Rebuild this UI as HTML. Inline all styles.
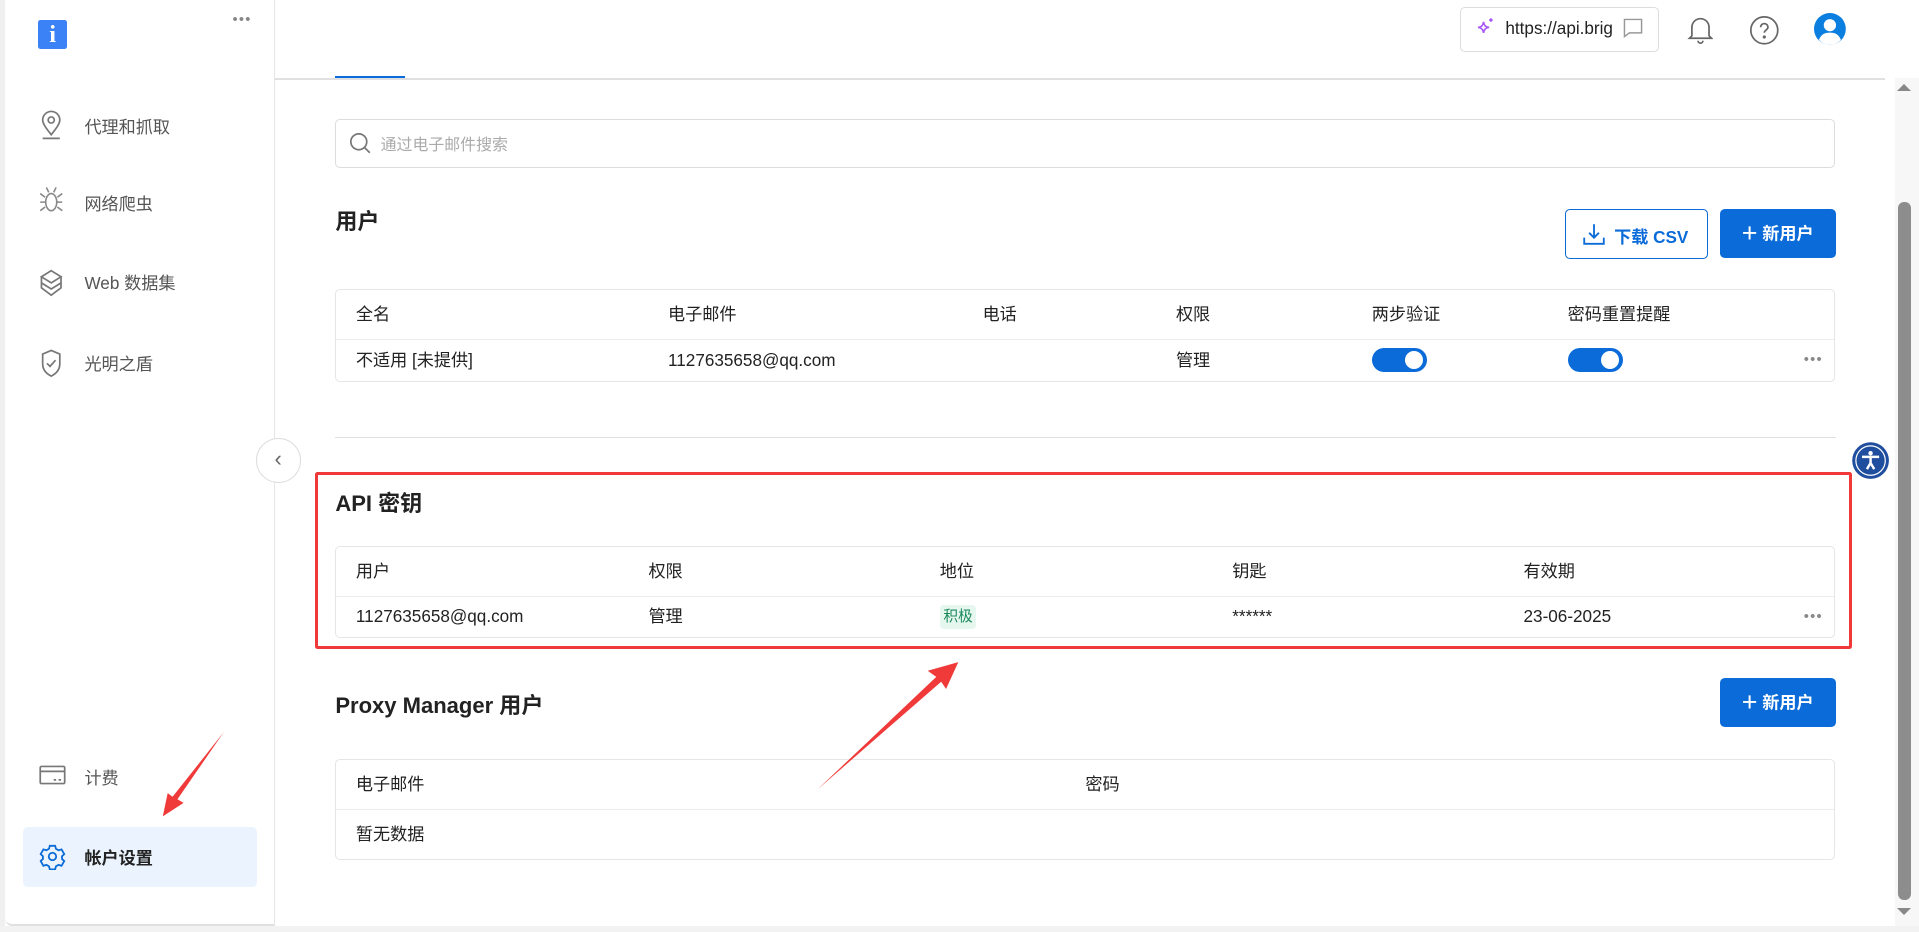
<!DOCTYPE html>
<html><head><meta charset="utf-8"><style>
html,body{margin:0;padding:0;width:1919px;height:932px;overflow:hidden;background:#fff;}
#z{zoom:1.2239;width:1568px;height:762px;position:relative;font-family:"Liberation Sans","Noto Sans CJK SC",sans-serif;color:#222;font-size:14px;}
.a{position:absolute;}
.nav{position:absolute;left:32px;font-size:14px;color:#555;}
.nav span{position:absolute;left:37px;top:0;white-space:nowrap;}
.tbl{position:absolute;left:274px;width:1224px;border:1px solid #e6e6e6;border-radius:4px;}
.row{position:relative;border-bottom:1px solid #ececec;}
.row:last-child{border-bottom:none}
.row span{position:absolute;top:0;bottom:0;display:flex;align-items:center;white-space:nowrap;line-height:1;}
.btnb{position:absolute;background:#0b6bd8;color:#fff;border-radius:4px;font-weight:bold;font-size:14px;text-align:center;}
.tog{position:absolute;width:45px;height:19px;border-radius:10px;background:#0b6bd8;}
.tog:after{content:"";position:absolute;right:3px;top:2px;width:15px;height:15px;border-radius:50%;background:#fff;}
.dots{color:#888;font-size:12px;letter-spacing:1px}
</style></head><body><div id="z">
<div class="a" style="left:0;top:0;width:4px;height:757px;background:#f0f0f0"></div>
<div class="a" style="left:4px;top:0;width:220px;height:755px;border-right:1px solid #e5e5e5;border-bottom:2px solid #e0e0e0;border-radius:0 0 0 6px"></div>
<div class="a" style="left:0;top:757px;width:1568px;height:5px;background:#f2f2f2"></div>
<div class="a" style="left:31px;top:16px;width:24px;height:24px;background:#3b82f6;border-radius:2px;color:#fff;font-weight:bold;font-family:'Liberation Serif',serif;font-size:20px;text-align:center;line-height:24px">i</div>
<div class="a dots" style="left:190px;top:10px">•••</div>
<div class="nav" style="top:89px"><svg width="20" height="26" viewBox="0 0 20 26" fill="none" stroke="#777" stroke-width="1.4"><path d="M10 21C6 16 3 12 3 9a7 7 0 0114 0c0 3-3 7-7 12z"/><circle cx="10" cy="9" r="2.5"/><path d="M3 24h14"/></svg><span style="top:3px">代理和抓取</span></div>
<div class="nav" style="top:151px"><svg width="20" height="28" viewBox="0 0 20 28" fill="none" stroke="#888" stroke-width="1.3"><ellipse cx="10" cy="14" rx="4.5" ry="7"/><path d="M5 10L1 7M5 14H1M5 18l-4 3M15 10l4-3M15 14h4M15 18l4 3M8 6L6 2M12 6l2-4"/></svg><span style="top:4px">网络爬虫</span></div>
<div class="nav" style="top:218px"><svg width="20" height="26" viewBox="0 0 20 26" fill="none" stroke="#777" stroke-width="1.4"><path d="M10 3l8 5-8 5-8-5z"/><path d="M2 8v9l8 6 8-6V8"/><path d="M2 13l8 5 8-5"/></svg><span style="top:2px">Web 数据集</span></div>
<div class="nav" style="top:284px"><svg width="20" height="26" viewBox="0 0 20 26" fill="none" stroke="#777" stroke-width="1.4"><path d="M10 2l7 3v8c0 5-3 8-7 10-4-2-7-5-7-10V5z"/><path d="M6.5 12.5l2.5 2.5 4.5-5"/></svg><span style="top:2px">光明之盾</span></div>
<div class="nav" style="top:624px"><svg width="22" height="18" viewBox="0 0 22 18" fill="none" stroke="#777" stroke-width="1.4"><rect x="1" y="2" width="20" height="14" rx="1"/><path d="M1 6h20M12 13h2M16 13h2"/></svg><span style="top:0px">计费</span></div>
<div class="a" style="left:19px;top:676px;width:191px;height:49px;background:#ebf4fe;border-radius:4px"></div>
<div class="nav" style="top:689px"><svg width="22" height="22" viewBox="0 0 24 24" fill="none" stroke="#0b6bd8" stroke-width="1.6"><path d="M9.6 2.5h4.8l.7 2.7 2.3 1.3 2.7-.8 2.4 4.2-2 1.9v2.4l2 1.9-2.4 4.2-2.7-.8-2.3 1.3-.7 2.7H9.6l-.7-2.7-2.3-1.3-2.7.8-2.4-4.2 2-1.9v-2.4l-2-1.9 2.4-4.2 2.7.8 2.3-1.3z"/><circle cx="12" cy="12" r="3.3"/></svg><span style="top:1px;color:#222;font-weight:bold">帐户设置</span></div>
<div class="a" style="left:209px;top:358px;width:35px;height:35px;border:1px solid #ddd;border-radius:50%;background:#fff;text-align:center;line-height:33px;color:#666;font-size:18px">‹</div>
<div class="a" style="left:225px;top:64px;width:1315px;height:1px;background:#e0e0e0"></div>
<div class="a" style="left:274px;top:62px;width:57px;height:2px;background:#0b6bd8"></div>
<div class="a" style="left:1193px;top:6px;width:161px;height:35px;border:1px solid #ddd;border-radius:4px"></div>
<svg class="a" style="left:1205px;top:14px" width="18" height="18" viewBox="0 0 18 18" fill="none" stroke="#a855f7" stroke-width="1.3"><path d="M7 4c.5 3 1.5 4 4.5 4.5C8.5 9 7.5 10 7 13c-.5-3-1.5-4-4.5-4.5C5.5 8 6.5 7 7 4z"/><path d="M13 1v3M11.5 2.5h3"/></svg>
<div class="a" style="left:1230px;top:15px;width:88px;overflow:hidden;white-space:nowrap;font-size:14px">https://api.brightdata</div>
<svg class="a" style="left:1325px;top:14px" width="18" height="18" viewBox="0 0 18 18" fill="none" stroke="#999" stroke-width="1.2"><path d="M2 2h14v11H6l-4 3z"/></svg>
<svg class="a" style="left:1378px;top:12px" width="22" height="24" viewBox="0 0 22 24" fill="none" stroke="#666" stroke-width="1.4"><path d="M4 17V10a7 7 0 0114 0v7l2 2H2z"/><path d="M9 21a2 2 0 004 0"/></svg>
<svg class="a" style="left:1429px;top:12px" width="25" height="25" viewBox="0 0 25 25" fill="none" stroke="#666" stroke-width="1.4"><circle cx="12.5" cy="12.5" r="11"/><path d="M9.5 10a3 3 0 116 0c0 2-3 2.5-3 4.5"/><circle cx="12.5" cy="18" r=".6" fill="#666"/></svg>
<svg class="a" style="left:1482px;top:11px" width="26" height="26" viewBox="0 0 26 26"><circle cx="13" cy="13" r="13" fill="#0b7fe0"/><circle cx="13" cy="10" r="5" fill="#fff"/><path d="M4 22c2-5 5-6 9-6s7 1 9 6a12 12 0 01-18 0z" fill="#fff"/></svg>
<div class="a" style="left:1548px;top:64px;width:20px;height:693px;background:#f7f7f7"></div>
<div class="a" style="left:1551px;top:165px;width:10px;height:570px;background:#8d8d8d;border-radius:5px"></div>
<div class="a" style="left:1550px;top:69px;width:0;height:0;border:6px solid transparent;border-bottom-color:#888;border-top:0"></div>
<div class="a" style="left:1550px;top:742px;width:0;height:0;border:6px solid transparent;border-top-color:#888;border-bottom:0"></div>
<div class="a" style="left:274px;top:97px;width:1224px;height:39px;border:1px solid #ddd;border-radius:4px"></div>
<svg class="a" style="left:285px;top:108px" width="18" height="18" viewBox="0 0 18 18" fill="none" stroke="#777" stroke-width="1.4"><circle cx="8" cy="8" r="6.5"/><path d="M13 13l4 4"/></svg>
<div class="a" style="left:311px;top:108px;color:#aaa;font-size:13px">通过电子邮件搜索</div>
<div class="a" style="left:274px;top:167px;font-size:18px;font-weight:bold">用户</div>
<div class="a" style="left:1279px;top:171px;width:115px;height:39px;border:1px solid #0b6bd8;border-radius:4px;color:#0b6bd8;font-weight:bold;font-size:14px"><svg style="position:absolute;left:14px;top:10px" width="18" height="19" viewBox="0 0 18 19" fill="none" stroke="#0b6bd8" stroke-width="1.5"><path d="M9 1v11M5 8l4 4 4-4M1 12v5h16v-5"/></svg><span style="position:absolute;left:39px;top:10px">下载 CSV</span></div>
<div class="btnb" style="left:1405px;top:171px;width:95px;height:40px;line-height:40px"><span style="font-size:22px;font-weight:normal;vertical-align:-2px">+</span> 新用户</div>
<div class="tbl" style="top:236px">
<div class="row" style="height:40px"><span style="left:16px">全名</span><span style="left:271px">电子邮件</span><span style="left:528px">电话</span><span style="left:686px">权限</span><span style="left:846px">两步验证</span><span style="left:1006px">密码重置提醒</span></div>
<div class="row" style="height:34px"><span style="left:16px">不适用 [未提供]</span><span style="left:271px">1127635658@qq.com</span><span style="left:686px">管理</span><div class="tog" style="left:846px;top:7px"></div><div class="tog" style="left:1006px;top:7px"></div><span class="dots" style="left:1199px">•••</span></div>
</div>
<div class="a" style="left:274px;top:357px;width:1226px;height:1px;background:#e0e0e0"></div>
<svg class="a" style="left:1512px;top:360px" width="32" height="32" viewBox="0 0 32 32"><circle cx="16" cy="16" r="15" fill="#1f4e9e"/><circle cx="16" cy="16" r="12" fill="none" stroke="#fff" stroke-width="1"/><circle cx="16" cy="10" r="1.8" fill="#fff"/><path d="M9 13h14M16 13v5M16 18l-3 5M16 18l3 5" stroke="#fff" stroke-width="2" fill="none"/></svg>
<div class="a" style="left:274px;top:397px;font-size:18px;font-weight:bold">API 密钥</div>
<div class="tbl" style="top:446px">
<div class="row" style="height:40px"><span style="left:16px">用户</span><span style="left:255px">权限</span><span style="left:493px">地位</span><span style="left:732px">钥匙</span><span style="left:970px">有效期</span></div>
<div class="row" style="height:33px"><span style="left:16px">1127635658@qq.com</span><span style="left:255px">管理</span><span style="left:493px;top:7px;bottom:7px;background:#e6f7f0;color:#1a8a5a;font-size:12px;padding:0 3px;border-radius:3px">积极</span><span style="left:732px">******</span><span style="left:970px">23-06-2025</span><span class="dots" style="left:1199px">•••</span></div>
</div>
<div class="a" style="left:257px;top:386px;width:1251px;height:139px;border:3px solid #f03a3a;border-radius:2px"></div>
<div class="a" style="left:274px;top:562px;font-size:18px;font-weight:bold">Proxy Manager 用户</div>
<div class="btnb" style="left:1405px;top:554px;width:95px;height:40px;line-height:40px"><span style="font-size:22px;font-weight:normal;vertical-align:-2px">+</span> 新用户</div>
<div class="tbl" style="top:620px">
<div class="row" style="height:40px"><span style="left:16px">电子邮件</span><span style="left:612px">密码</span></div>
<div class="row" style="height:40px"><span style="left:16px">暂无数据</span></div>
</div>
<svg class="a" style="left:0;top:0" width="1568" height="762" viewBox="0 0 1568 762"><polygon points="668,645 765,553 758,548 783,541 773,563 769,557" fill="#f03a3a"/><polygon points="183,598 145,653 150,656 133,667 137,648 141,651" fill="#f03a3a"/></svg>
</div></body></html>
